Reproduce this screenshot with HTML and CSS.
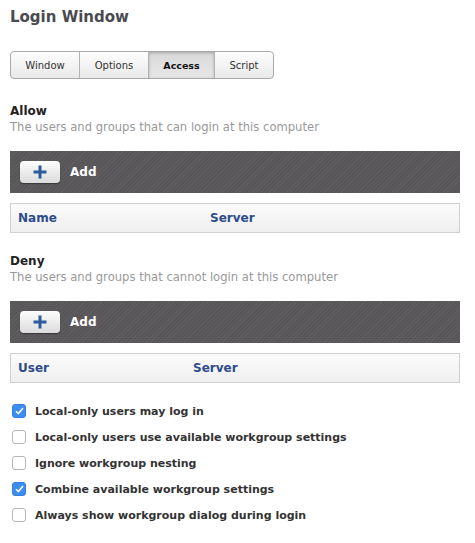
FILE: index.html
```html
<!DOCTYPE html>
<html>
<head>
<meta charset="utf-8">
<link rel="stylesheet" href="styles.css">
</head>
<body>
<div class="page">
  <h1 class="title">Login Window</h1>
  <div class="tabs">
    <div class="tab t-window">Window</div>
    <div class="tab t-options">Options</div>
    <div class="tab t-access active">Access</div>
    <div class="tab t-script">Script</div>
  </div>

  <div class="section s-allow">
    <div class="sec-title">Allow</div>
    <div class="sec-desc">The users and groups that can login at this computer</div>
  </div>
  <div class="toolbar">
    <div class="add-btn"><svg width="14" height="14" viewBox="0 0 14 14"><rect x="5.5" y="0.5" width="3" height="13" fill="#2d5b9c"/><rect x="0.5" y="5.5" width="13" height="3" fill="#2d5b9c"/></svg></div>
    <span class="add-label">Add</span>
  </div>
  <div class="thead">
    <span class="col c-name">Name</span>
    <span class="col">Server</span>
  </div>

  <div class="section s-deny">
    <div class="sec-title">Deny</div>
    <div class="sec-desc">The users and groups that cannot login at this computer</div>
  </div>
  <div class="toolbar">
    <div class="add-btn"><svg width="14" height="14" viewBox="0 0 14 14"><rect x="5.5" y="0.5" width="3" height="13" fill="#2d5b9c"/><rect x="0.5" y="5.5" width="13" height="3" fill="#2d5b9c"/></svg></div>
    <span class="add-label">Add</span>
  </div>
  <div class="thead">
    <span class="col c-user">User</span>
    <span class="col">Server</span>
  </div>

  <div class="checks">
    <label class="check"><span class="box on"><svg width="9" height="8" viewBox="0 0 9 8"><path d="M1 4.2 L3.4 6.6 L8 1" fill="none" stroke="#fff" stroke-width="1.6"/></svg></span>Local-only users may log in</label>
    <label class="check"><span class="box"></span>Local-only users use available workgroup settings</label>
    <label class="check"><span class="box"></span>Ignore workgroup nesting</label>
    <label class="check"><span class="box on"><svg width="9" height="8" viewBox="0 0 9 8"><path d="M1 4.2 L3.4 6.6 L8 1" fill="none" stroke="#fff" stroke-width="1.6"/></svg></span>Combine available workgroup settings</label>
    <label class="check"><span class="box"></span>Always show workgroup dialog during login</label>
  </div>
</div>
</body>
</html>
```

FILE: styles.css
```css
html, body {
  margin: 0;
  padding: 0;
  background: #ffffff;
}
.page {
  font-family: "DejaVu Sans", "Liberation Sans", sans-serif;
  padding: 0 15px 0 10px;
  color: #333;
}
.title {
  margin: 0;
  padding-top: 6px;
  height: 24px;
  font-size: 15px;
  font-weight: bold;
  color: #4a4a4f;
  line-height: 22px;
}
.tabs {
  display: flex;
  margin-top: 21px;
  width: 262px;
  height: 26px;
  border: 1px solid #a9a9a9;
  border-radius: 4px;
  overflow: hidden;
  background: linear-gradient(#fdfdfd, #e9e9e9);
}
.tab {
  font-size: 10px;
  color: #333;
  display: flex;
  align-items: center;
  justify-content: center;
  border-right: 1px solid #b3b3b3;
}
.tab:last-child { border-right: none; }
.t-window { width: 68px; }
.t-options { width: 68px; }
.t-access { width: 65px; }
.t-script { flex: 1; }
.tab.active {
  color: #111;
  font-weight: bold;
  font-size: 9.5px;
  background: linear-gradient(#d9d9d9, #e6e6e6);
  box-shadow: inset 0 1px 3px rgba(0,0,0,0.25);
}
.section {
  margin-top: 24px;
}
.s-deny { margin-top: 20px; }
.sec-title {
  font-size: 12px;
  font-weight: bold;
  color: #222;
  line-height: 16px;
}
.sec-desc {
  font-size: 11.6px;
  color: #999;
  line-height: 16px;
}
.toolbar {
  margin-top: 16px;
  height: 42px;
  display: flex;
  align-items: center;
  padding-left: 10px;
  background-color: #585659;
  background-image: repeating-linear-gradient(-45deg, rgba(255,255,255,0.045) 0 1px, transparent 1px 3px);
}
.add-btn {
  width: 40px;
  height: 22px;
  border-radius: 4px;
  background: linear-gradient(#fdfdfd, #dcdcdc);
  box-shadow: 0 1px 1px rgba(0,0,0,0.4);
  display: flex;
  align-items: center;
  justify-content: center;
}
.add-label {
  margin-left: 10px;
  font-size: 12px;
  font-weight: bold;
  color: #fff;
}
.thead {
  margin-top: 10px;
  height: 28px;
  border: 1px solid #d0d0d0;
  background: linear-gradient(#fbfbfb, #efefef);
  display: flex;
  align-items: center;
  padding-left: 7px;
}
.col {
  font-size: 12px;
  font-weight: bold;
  color: #2d4c8a;
}
.c-name { width: 192px; }
.c-user { width: 175px; }
.checks {
  margin-top: 20px;
  display: flex;
  flex-direction: column;
  gap: 10px;
}
.check {
  display: flex;
  align-items: center;
  height: 16px;
  font-size: 11px;
  font-weight: bold;
  color: #333;
}
.box {
  width: 12px;
  height: 12px;
  margin-left: 2px;
  margin-right: 9px;
  border: 1px solid #b5b5b5;
  border-radius: 3px;
  background: #fff;
  display: flex;
  align-items: center;
  justify-content: center;
}
.box.on {
  background: #3b8ef0;
  border-color: #3480e0;
}
```
